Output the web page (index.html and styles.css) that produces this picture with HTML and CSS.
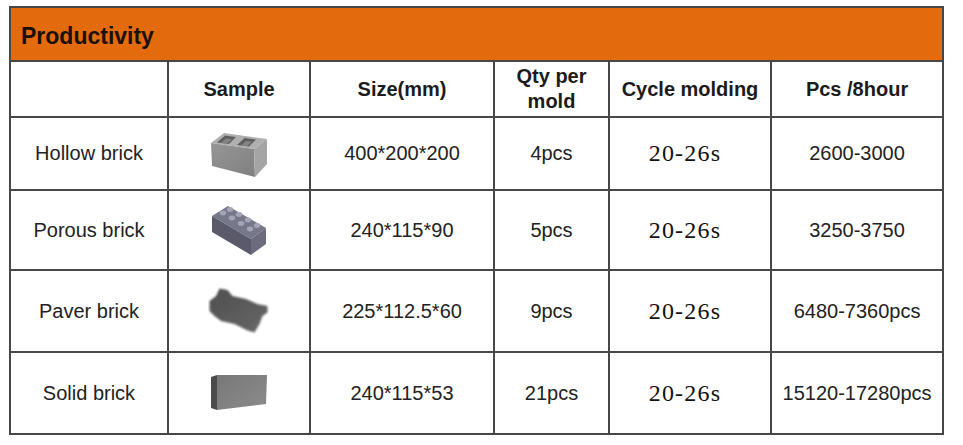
FILE: index.html
```html
<!DOCTYPE html>
<html lang="en">
<head>
<meta charset="utf-8">
<title>Productivity</title>
<link rel="stylesheet" href="styles.css">
</head>
<body>
<table class="prod">
  <colgroup>
    <col class="c-name"><col class="c-sample"><col class="c-size"><col class="c-qty"><col class="c-cycle"><col class="c-pcs">
  </colgroup>
  <tr class="title-row"><td colspan="6" class="title">Productivity</td></tr>
  <tr class="head-row">
    <th></th>
    <th>Sample</th>
    <th>Size(mm)</th>
    <th class="qty-head">Qty per<br>mold</th>
    <th>Cycle molding</th>
    <th>Pcs /8hour</th>
  </tr>
  <tr class="row-1">
    <td>Hollow brick</td>
    <td class="sample">
      <svg width="60" height="48" viewBox="0 0 60 48">
        <defs>
          <linearGradient id="hf" x1="0" y1="0" x2="1" y2="1">
            <stop offset="0" stop-color="#969696"/><stop offset="1" stop-color="#808080"/>
          </linearGradient>
        </defs>
        <polygon points="2,13 15,3 58,9 45,19" fill="#b0b0b0"/>
        <polygon points="2,13 45,19 46,47 3,36" fill="url(#hf)"/>
        <polygon points="45,19 58,9 58,34 46,47" fill="#a5a5a5"/>
        <polygon points="8,12.5 16,5.5 27,7 20,14" fill="#5e5e5e"/>
        <polygon points="28,15 35.5,8 47,9.5 40,16.5" fill="#5e5e5e"/>
        <polygon points="12,12.8 17,8.5 23,9.3 18,13.7" fill="#838383"/>
        <polygon points="32,15.5 37,11 43,11.8 38,16.3" fill="#838383"/>
      </svg>
    </td>
    <td>400*200*200</td>
    <td>4pcs</td>
    <td class="cycle">20-26s</td>
    <td>2600-3000</td>
  </tr>
  <tr class="row-2">
    <td>Porous brick</td>
    <td class="sample">
      <svg width="56" height="52" viewBox="0 0 56 52">
        <polygon points="1,12 17,2 55,24 40,35" fill="#77778a"/>
        <polygon points="1,12 40,35 40,51 1,28" fill="#5a5a6b"/>
        <polygon points="40,35 55,24 55,40 40,51" fill="#6c6c7e"/>
        <g fill="#a4a4b8">
          <ellipse cx="12" cy="9" rx="3.2" ry="2.4"/>
          <ellipse cx="19" cy="5.5" rx="3.2" ry="2.4"/>
          <ellipse cx="21" cy="14" rx="3.2" ry="2.4"/>
          <ellipse cx="28" cy="10.5" rx="3.2" ry="2.4"/>
          <ellipse cx="30" cy="19.5" rx="3.2" ry="2.4"/>
          <ellipse cx="37" cy="16" rx="3.2" ry="2.4"/>
          <ellipse cx="39" cy="25" rx="3.2" ry="2.4"/>
          <ellipse cx="46" cy="21.5" rx="3.2" ry="2.4"/>
        </g>
      </svg>
    </td>
    <td>240*115*90</td>
    <td>5pcs</td>
    <td class="cycle">20-26s</td>
    <td>3250-3750</td>
  </tr>
  <tr class="row-3">
    <td>Paver brick</td>
    <td class="sample">
      <svg width="62" height="48" viewBox="0 0 62 48">
        <defs>
          <linearGradient id="pg" x1="0" y1="0" x2="1" y2="1">
            <stop offset="0" stop-color="#4e4e4e"/><stop offset="1" stop-color="#686868"/>
          </linearGradient>
          <filter id="soft"><feGaussianBlur stdDeviation="0.9"/></filter>
        </defs>
        <polygon filter="url(#soft)" fill="url(#pg)" points="1.5,14 8,9 11.5,1.5 19.5,3 24.5,9 38,12 49.5,17 59.5,19 59.5,25.5 54.5,29 51.5,37 46.5,45.5 39.5,43.5 26.5,37 13,34 6.5,29 1.5,24"/>
      </svg>
    </td>
    <td>225*112.5*60</td>
    <td>9pcs</td>
    <td class="cycle">20-26s</td>
    <td>6480-7360pcs</td>
  </tr>
  <tr class="row-4">
    <td>Solid brick</td>
    <td class="sample">
      <svg width="58" height="36" viewBox="0 0 58 36">
        <defs>
          <linearGradient id="sg" x1="0" y1="0" x2="1" y2="1">
            <stop offset="0" stop-color="#787878"/><stop offset="1" stop-color="#8c8c8c"/>
          </linearGradient>
        </defs>
        <polygon points="1,2 7,0 7,35 1,33" fill="#4c4c4c"/>
        <polygon points="7,0 57,0 56,29 7,35" fill="url(#sg)"/>
      </svg>
    </td>
    <td>240*115*53</td>
    <td>21pcs</td>
    <td class="cycle">20-26s</td>
    <td>15120-17280pcs</td>
  </tr>
</table>
</body>
</html>
```

FILE: styles.css
```css
html, body {
  margin: 0;
  padding: 0;
  background: #ffffff;
}

body {
  padding: 6px 0 0 9px;
  font-family: "Liberation Sans", Arial, sans-serif;
  color: #222222;
}

.prod {
  border-collapse: collapse;
  table-layout: fixed;
  width: 933px;
}

.c-name { width: 158px; }
.c-sample { width: 142px; }
.c-size { width: 184px; }
.c-qty { width: 115px; }
.c-cycle { width: 162px; }
.c-pcs { width: 172px; }

.prod td, .prod th {
  border: 2px solid #474747;
  text-align: center;
  vertical-align: middle;
  padding: 0;
  font-size: 20px;
}

.prod th {
  font-weight: bold;
  color: #1b1b1b;
}

.title-row td.title {
  height: 54px;
  background: #e36b0d;
  text-align: left;
  padding: 4px 0 0 10px;
  box-sizing: border-box;
  font-weight: bold;
  font-size: 23px;
  color: #1a1008;
}

.head-row th {
  height: 54px;
}

.qty-head {
  line-height: 25px;
}

.row-1 td { height: 71px; }
.row-2 td { height: 78px; }
.row-3 td { height: 80px; }
.row-4 td { height: 80px; }

.sample svg {
  display: block;
  margin: 0 auto;
}

.cycle {
  font-family: "Liberation Serif", "Times New Roman", serif;
  font-size: 24px !important;
  letter-spacing: 1.2px;
  color: #111111;
  padding-right: 10px !important;
}
```
